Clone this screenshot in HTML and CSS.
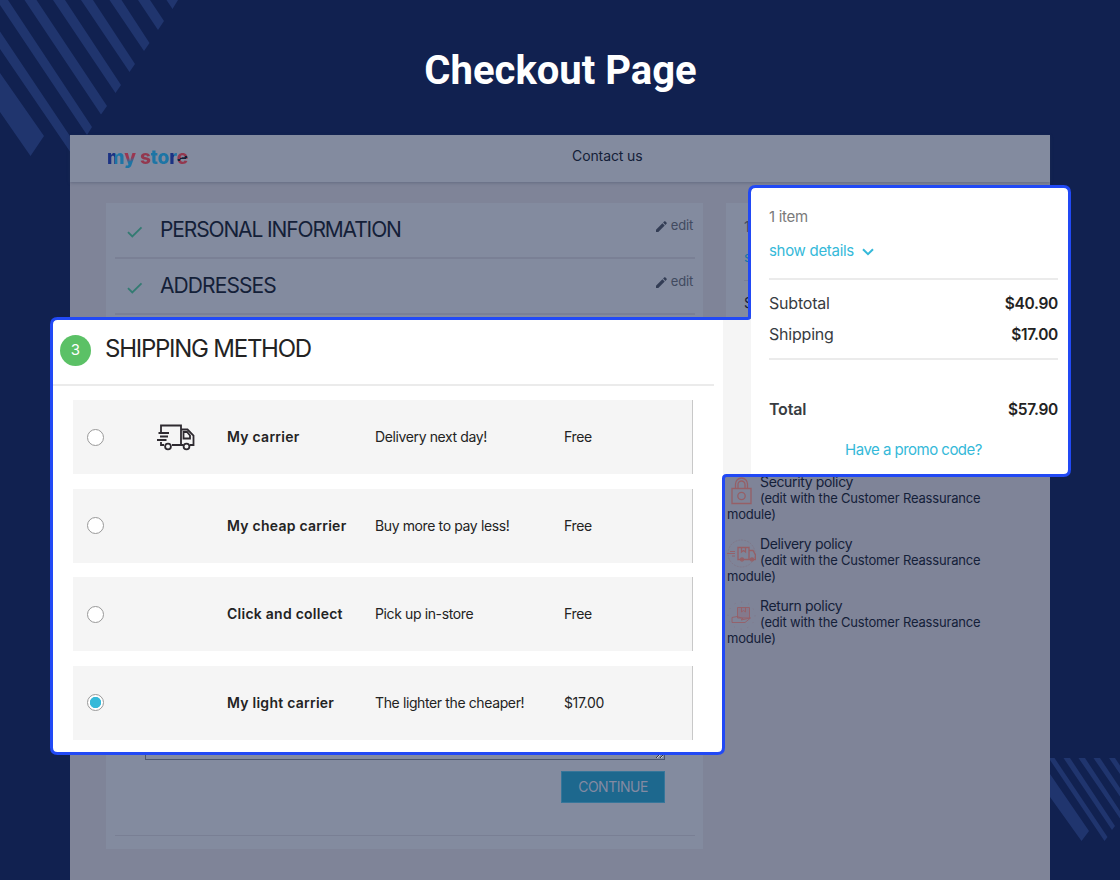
FILE: index.html
```html
<!DOCTYPE html>
<html lang="en">
<head>
    <meta charset="utf-8">
    <title>Checkout Page</title>
    <link rel="stylesheet" href="styles.css">
</head>
<body>
    <svg class="stripes stripes-top" width="180" height="160" viewBox="0 0 180 160">
        <path d="M0 73L44 136L30.500 156L0 112ZM0 31.500L78 148L73 156L0 49ZM0 0H8L92 127L87 135L0 5ZM24.500 0H36.500L107 106L101 114.500ZM53 0H65L121 85L115.500 93ZM81 0H93L135 64L129.500 72ZM109.500 0H121.500L149.500 43L144 51ZM138 0H150L164 21L158 30ZM166.500 0H178L172.500 9Z"/>
    </svg>
    <svg class="stripes stripes-bottom" width="70" height="84" viewBox="0 0 70 84">
        <path d="M0 16L39 73L31.500 83L0 39ZM0 0H4.500L57.500 79L54.500 83L0 2ZM13.500 0H20L65 68L62 72ZM28.500 0H35L70 53V60.500ZM43.500 0H50L70 30V38.500ZM59 0H65L70 7.500V16Z"/>
    </svg>

    <h1>Checkout Page</h1>

    <div class="store">
        <header>
            <div class="logo"><span class="m">m</span><span class="y">y</span> <span class="s">s</span><span class="t">t</span><span class="o">o</span><span class="r">r</span><span class="e">e</span></div>
            <a class="contact">Contact us</a>
        </header>
        <div class="content">
            <main>
                <div class="step">
                    <svg class="check" width="16" height="12" viewBox="0 0 16 12"><path d="M1 6.200L5.300 10.500L14.500 1.300"/></svg>
                    <h2 class="personal">PERSONAL INFORMATION</h2>
                    <span class="edit"><svg width="11" height="11" viewBox="0 0 11 11"><path d="M0 8.700L6.400 2.300L8.700 4.600L2.300 11H0ZM7.100 1.600L8.400 .3Q8.800 0 9.200 .3L10.700 1.800Q11 2.200 10.700 2.600L9.400 3.900Z"/></svg>edit</span>
                </div>
                <div class="step">
                    <svg class="check" width="16" height="12" viewBox="0 0 16 12"><path d="M1 6.200L5.300 10.500L14.500 1.300"/></svg>
                    <h2 class="addresses">ADDRESSES</h2>
                    <span class="edit"><svg width="11" height="11" viewBox="0 0 11 11"><path d="M0 8.700L6.400 2.300L8.700 4.600L2.300 11H0ZM7.100 1.600L8.400 .3Q8.800 0 9.200 .3L10.700 1.800Q11 2.200 10.700 2.600L9.400 3.900Z"/></svg>edit</span>
                </div>
                <div class="delivery">
                    <textarea></textarea>
                    <button class="continue">CONTINUE</button>
                </div>
            </main>
            <aside>
                <div class="cart">
                    <p class="cart-items">1</p>
                    <p class="cart-link">s</p>
                    <p class="cart-sub">S</p>
                </div>
                <div class="policy">
                    <svg width="29" height="29" viewBox="0 0 29 29"><path d="M5 11.500H24V26.500H5ZM8.500 11.500V7a6 6 0 0 1 12 0V11.500M11 11.500V7.500a3.500 3.500 0 0 1 7 0V11.500"/><circle cx="14.500" cy="19" r="3.700"/></svg>
                    <p class="policy-name">Security policy</p>
                    <p>(edit with the Customer Reassurance module)</p>
                </div>
                <div class="policy">
                    <svg width="29" height="29" viewBox="0 0 29 29"><circle class="faint" cx="14.500" cy="14.500" r="13.500"/><path d="M11 8.500H22V20.500H11ZM14.500 8.500V13L16.500 11.500L18.500 13V8.500M22 11.500H26L28.500 16V20.500H22"/><circle cx="15" cy="20.500" r="1.500"/><circle cx="25" cy="20.500" r="1.500"/><path class="speed" d="M0 14.500H8M3 12.500H8M5 17H8"/></svg>
                    <p class="policy-name">Delivery policy</p>
                    <p>(edit with the Customer Reassurance module)</p>
                </div>
                <div class="policy">
                    <svg width="29" height="29" viewBox="0 0 29 29"><circle class="faint dots" cx="14.500" cy="14.500" r="13.500"/><path class="box" d="M10.500 6.500H22.500V17H10.500Z"/><path class="thin" d="M14.500 6.500V11L16.500 9.500L18.500 11V6.500M5 16.500L10 15.500L16 17.500L14 19L23.500 17L18 21.500H5Z"/></svg>
                    <p class="policy-name">Return policy</p>
                    <p>(edit with the Customer Reassurance module)</p>
                </div>
            </aside>
        </div>
    </div>

    <!-- highlighted area over the store -->
    <div class="gap-strip"></div>
    <section class="shipping">
        <div class="shipping-head">
            <span class="number">3</span>
            <h2>SHIPPING METHOD</h2>
        </div>
        <div class="carriers">
            <label class="carrier">
                <input type="radio" name="carrier">
                <svg class="truck" width="39" height="27" viewBox="0 0 39 27"><path d="M5 8V1.500H25V21H16M25 5.500H31.500L37.500 11.500V21H34M5 18V21H8M27.500 21H25M2.500 9H13M4 12.500H12M1 16H10.500M34 14.500H27.500V8H31L34 11.500Z"/><circle cx="12" cy="22.500" r="2.900"/><circle cx="30.500" cy="22.500" r="2.900"/></svg>
                <b>My carrier</b>
                <span>Delivery next day!</span>
                <span>Free</span>
            </label>
            <label class="carrier">
                <input type="radio" name="carrier">
                <i></i>
                <b>My cheap carrier</b>
                <span>Buy more to pay less!</span>
                <span>Free</span>
            </label>
            <label class="carrier">
                <input type="radio" name="carrier">
                <i></i>
                <b>Click and collect</b>
                <span>Pick up in-store</span>
                <span>Free</span>
            </label>
            <label class="carrier">
                <input type="radio" name="carrier" checked>
                <i></i>
                <b>My light carrier</b>
                <span>The lighter the cheaper!</span>
                <span>$17.00</span>
            </label>
        </div>
    </section>
    <section class="summary">
        <p class="items">1 item</p>
        <a class="details">show details <svg width="12" height="8" viewBox="0 0 12 8"><path d="M1 1.200L6 6.200L11 1.200"/></svg></a>
        <div class="lines">
            <div class="line"><span>Subtotal</span><b>$40.90</b></div>
            <div class="line"><span>Shipping</span><b>$17.00</b></div>
        </div>
        <div class="line total"><strong>Total</strong><b>$57.90</b></div>
        <a class="promo">Have a promo code?</a>
    </section>
    <svg class="outline" width="1120" height="880" viewBox="0 0 1120 880">
        <path d="M57.500 318.500H747.500Q749.500 318.500 749.500 316.500V192.500Q749.500 186.500 755.500 186.500H1063.500Q1069.500 186.500 1069.500 192.500V469.500Q1069.500 475.500 1063.500 475.500H726.500Q723.500 475.500 723.500 478.500V747.500Q723.500 753.500 717.500 753.500H57.500Q51.500 753.500 51.500 747.500V324.500Q51.500 318.500 57.500 318.500Z"/>
    </svg>
</body>
</html>
```
FILE: styles.css
```css
* {
    box-sizing: border-box;
}

body {
    position: relative;
    width: 1120px;
    height: 880px;
    margin: 0;
    overflow: hidden;
    background-color: #112150;
    font-family: Inter, "Liberation Sans", sans-serif;
    font-size: 14px;
    color: #232323;
}

h1, h2, p {
    margin: 0;
    font-weight: 400;
}

svg {
    fill: none;
    display: block;
}

h1 {
    height: 135px;
    padding: 47px 0 0 1px;
    text-align: center;
    font-family: Roboto, sans-serif;
    font-size: 40px;
    line-height: 48px;
    font-weight: 700;
    color: white;
}

.stripes {
    position: absolute;
    fill: #20356e;
}

.stripes-top {
    top: 0;
    left: 0;
}

.stripes-bottom {
    top: 758px;
    right: 0;
}

/* store page, dimmed */
.store {
    position: relative;
    width: 980px;
    height: 745px;
    margin: 0 auto;
    background-color: #7f8498;
    color: #142038;
}

header {
    display: flex;
    height: 47px;
    padding-left: 37px;
    background-color: #838b9f;
    box-shadow: 0 1px 3px rgba(50, 60, 90, 0.35);
}

.logo {
    width: 465px;
    padding-top: 10px;
    font-size: 19px;
    line-height: 26px;
    font-weight: 800;
    letter-spacing: -0.100px;
}

.logo span {
    color: transparent;
    background-clip: text;
    -webkit-background-clip: text;
}

.logo .m { background-image: linear-gradient(90deg, #1b3283 50%, #1d75a5 50%); }
.logo .y { background-image: linear-gradient(170deg, #9b3750 50%, #1d75a5 68%); }
.logo .s { background-image: linear-gradient(#93384f, #93384f); }
.logo .t, .logo .o { background-image: linear-gradient(#1d75a5, #1d75a5); }
.logo .r { background-image: linear-gradient(90deg, #1b3283 60%, #1d75a5 60%); }
.logo .e { background-image: linear-gradient(160deg, #93384f 50%, #142038 50%, #142038 58%, #93384f 58%); }

.contact {
    padding-top: 11px;
    line-height: 20px;
    letter-spacing: -0.1px;
}

.content {
    display: flex;
    gap: 23px;
    padding: 21px 36px 0;
}

main {
    display: flex;
    flex-direction: column;
    width: 597px;
    height: 646px;
    padding: 0 8px 13px 9px;
    background-color: #838b9f;
}

.step {
    display: flex;
    height: 56px;
    padding: 3px 2px 0 12px;
    border-bottom: 2px solid #7a8095;
}

.check {
    margin: 20px 17px 0 0;
    stroke: #337b72;
    stroke-width: 1.800;
}

.step h2 {
    font-size: 21px;
    line-height: 48px;
}

.personal {
    letter-spacing: -1.130px;
}

.addresses {
    letter-spacing: -0.900px;
}

.edit {
    display: flex;
    gap: 4px;
    margin-left: auto;
    font-size: 13px;
    line-height: 39px;
    letter-spacing: -0.2px;
    color: #414a60;
}

.edit svg {
    margin-top: 15px;
    fill: #333d55;
}

.delivery {
    display: flex;
    flex-direction: column;
    align-items: flex-end;
    flex: 1;
    padding: 30px 30px 0;
    border-bottom: 1px solid #797f94;
}

textarea {
    width: 520px;
    height: 415px;
    border: 1px solid #4c566e;
    background-color: transparent;
}

.continue {
    width: 104px;
    height: 32px;
    margin-top: 11px;
    padding: 0 0 2px;
    border: 1px solid #36769a;
    background-color: #1d688e;
    color: #838aa2;
    font-family: inherit;
    font-size: 14px;
    letter-spacing: -0.5px;
}

.cart {
    width: 288px;
    height: 253px;
    margin-bottom: 18px;
    padding: 14px 18px;
    background-color: #838b9f;
    line-height: 20px;
}

.cart-items {
    color: #414a60;
}

.cart-link {
    padding: 10px 0 13px;
    color: #1d75a5;
}

.cart-sub {
    padding-top: 11px;
    border-top: 1px solid #797f94;
    line-height: 22px;
}

.policy {
    width: 260px;
    height: 48px;
    margin: 0 0 14px 1px;
    font-size: 13px;
    line-height: 16px;
    letter-spacing: -0.180px;
}

.policy svg {
    float: left;
    margin: 3px 4px 0 0;
    stroke: #965f66;
    stroke-width: 1.300;
}

.policy .faint {
    stroke-width: 0.600;
    stroke: #80707f;
    stroke-dasharray: 2 1;
}

.policy .speed, .policy .thin {
    stroke-width: 0.900;
}

.policy .dots {
    stroke-dasharray: 1 6;
}

.policy .box {
    fill: #84798c;
    stroke-width: 0.900;
}

.policy .policy-name {
    font-size: 14px;
    letter-spacing: -0.350px;
}

/* white highlighted panels */
.gap-strip {
    position: absolute;
    left: 723px;
    top: 319px;
    width: 30px;
    height: 157px;
    background-color: #f5f5f5;
}

.shipping {
    position: absolute;
    left: 52px;
    top: 319px;
    width: 671px;
    height: 435px;
    padding: 1px 0 0 1px;
    border-radius: 5px 0 5px 5px;
    background-color: white;
}

.shipping-head {
    display: flex;
    width: 661px;
    height: 66px;
    padding-left: 7px;
    border-bottom: 2px solid #ebebeb;
}

.number {
    width: 31px;
    height: 31px;
    margin: 15px 14px 0 0;
    border-radius: 50%;
    background-color: #5bc166;
    color: white;
    font-size: 15px;
    line-height: 29px;
    text-align: center;
}

.shipping-head h2 {
    font-size: 24px;
    line-height: 58px;
    letter-spacing: -1.250px;
}

.carriers {
    display: flex;
    flex-direction: column;
    gap: 14.400px;
    padding: 14.400px 0 0 20px;
}

.carrier {
    display: grid;
    grid-template-columns: 69px 71px 148px 189px 1fr;
    align-items: center;
    width: 620px;
    height: 74px;
    padding: 0 0 0 14px;
    border-right: 1px solid #c8c8c8;
    background-color: #f5f5f5;
    letter-spacing: -0.380px;
}

.carrier b, .carrier span {
    padding-bottom: 1px;
}

.carrier b {
    font-weight: 600;
    letter-spacing: 0.250px;
}

.carrier input {
    appearance: none;
    width: 17px;
    height: 17px;
    margin: 0;
    border: 1px solid #999;
    border-radius: 50%;
    background-color: white;
}

.carrier input:checked {
    background-image: radial-gradient(circle, #35b9d9 5.300px, white 6px);
}

.truck {
    stroke: #2e2a30;
    stroke-width: 1.800;
}

.summary {
    position: absolute;
    left: 751px;
    top: 187px;
    width: 318px;
    height: 288px;
    padding: 20px 11px 0 18px;
    border-radius: 5px 5px 5px 0;
    background-color: white;
    line-height: 20px;
    font-size: 15px;
    letter-spacing: -0.300px;
}

.items {
    color: #7a7a7a;
}

.details {
    display: flex;
    align-items: center;
    gap: 8px;
    height: 20px;
    margin-top: 14px;
    color: #35b9d9;
}

.details svg {
    margin-top: 2px;
    stroke: #35b9d9;
    stroke-width: 2;
}

.lines {
    margin-top: 17px;
    padding-top: 8px;
    height: 82px;
    border-top: 2px solid #ebebeb;
    border-bottom: 2px solid #ebebeb;
}

.line {
    display: flex;
    justify-content: space-between;
    height: 31px;
    line-height: 31px;
    font-size: 16px;
    letter-spacing: -0.200px;
    color: #383c42;
}

.line b {
    font-size: 15.500px;
    font-weight: 600;
    letter-spacing: -0.300px;
    color: #232323;
}

.line strong {
    font-weight: 600;
}

.total {
    margin-top: 34px;
}

.promo {
    display: block;
    margin-top: 15px;
    text-align: center;
    letter-spacing: -0.520px;
    color: #35b9d9;
}

.outline {
    position: absolute;
    top: 0;
    left: 0;
    stroke: #2149f5;
    stroke-width: 3;
}
```
